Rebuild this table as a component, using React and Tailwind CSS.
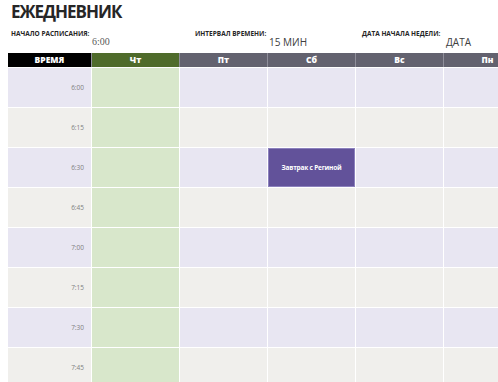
import React from "react";

const days = ["Чт", "Пт", "Сб", "Вс", "Пн"];
const times = ["6:00", "6:15", "6:30", "6:45", "7:00", "7:15", "7:30", "7:45"];

export default function App() {
  return (
    <div className="w-[498px] h-[382px] overflow-hidden bg-white font-['Open_Sans',sans-serif]">
      <div className="pl-[8px]">
        <h1 className="pl-[3px] h-[24px] text-[17px] font-bold leading-[24px] text-[#262626] tracking-[-1px]">
          ЕЖЕДНЕВНИК
        </h1>
        <div className="grid grid-cols-[84px_88px_88px_88px_88px_88px] h-[29px] text-[#262626]">
          <div className="pl-[3px] pt-[5px] text-[6.5px] font-bold leading-[10px] whitespace-nowrap">НАЧАЛО РАСПИСАНИЯ:</div>
          <div className="pt-[12px] text-[10px] leading-[12px] text-[#595959] font-['Liberation_Serif',serif]">6:00</div>
          <div className="pl-[15px] pt-[5px] text-[6.5px] font-bold leading-[10px] whitespace-nowrap">ИНТЕРВАЛ ВРЕМЕНИ:</div>
          <div className="pl-[1px] pt-[12px] text-[10px] leading-[12px] text-[#404040]">15 МИН</div>
          <div className="pl-[6px] pt-[5px] text-[6.5px] font-bold leading-[10px] whitespace-nowrap">ДАТА НАЧАЛА НЕДЕЛИ:</div>
          <div className="pl-[2px] pt-[12px] text-[10px] leading-[12px] text-[#404040]">ДАТА</div>
        </div>
        <div className="grid grid-cols-[83px_87px_87px_87px_87px_87px] gap-x-px h-[14px] bg-[#8f8e9a] w-[540px]">
          <div className="bg-black text-white text-[8.5px] font-extrabold flex items-center justify-center">ВРЕМЯ</div>
          {days.map((d, i) => (
            <div
              key={d}
              className={`${i === 0 ? "bg-[#4f6b2b]" : "bg-[#63626f]"} text-white text-[8.5px] font-extrabold flex items-center justify-center`}
            >
              {d}
            </div>
          ))}
        </div>
        <div className="grid grid-cols-[83px_87px_87px_87px_87px_87px] auto-rows-[39px] gap-px pt-px bg-white w-[540px]">
          {times.map((t, r) => {
            const rowBg = r % 2 === 0 ? "bg-[#e8e6f2]" : "bg-[#f0efec]";
            return (
              <React.Fragment key={t}>
                <div className={`${rowBg} flex items-center justify-end pr-[7px] text-[6.5px] text-[#7f7f7f]`}>{t}</div>
                {days.map((d, c) => {
                  if (c === 0) return <div key={d} className="bg-[#d8e7cb]" />;
                  if (c === 2 && r === 2)
                    return (
                      <div key={d} className="bg-[#62529a] border border-[#8c81bd] flex items-center justify-center text-white text-[6.5px] font-bold tracking-[-0.2px]">
                        Завтрак с Региной
                      </div>
                    );
                  return <div key={d} className={rowBg} />;
                })}
              </React.Fragment>
            );
          })}
        </div>
      </div>
    </div>
  );
}
